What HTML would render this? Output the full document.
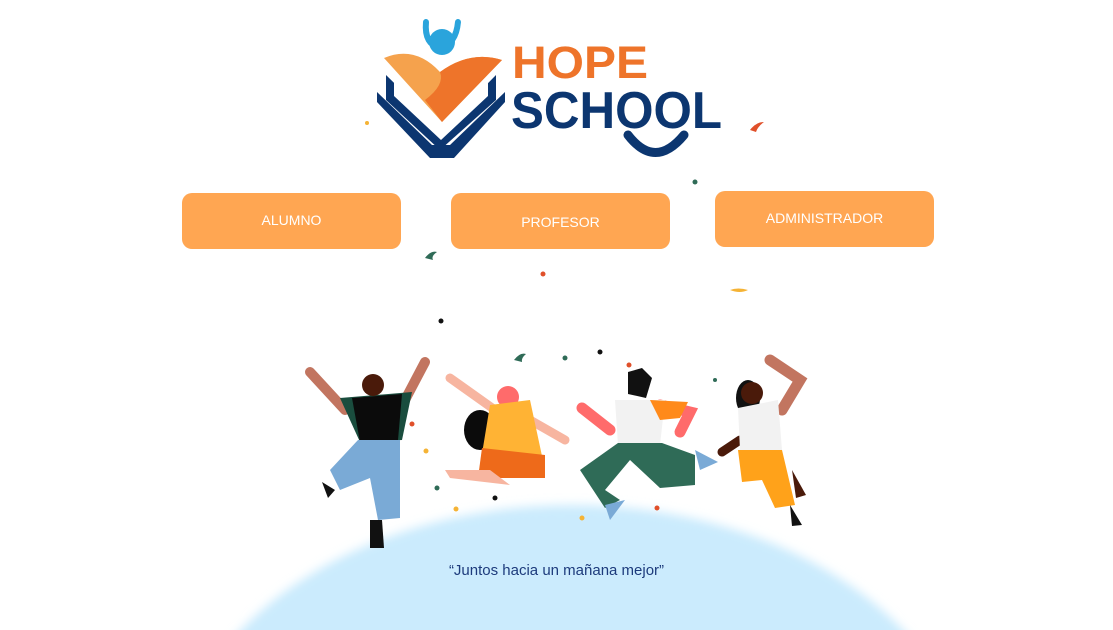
<!DOCTYPE html>
<html><head><meta charset="utf-8"><style>
html,body{margin:0;width:1113px;height:630px;overflow:hidden}
body{background:#fff;font-family:"Liberation Sans",sans-serif;position:relative}
.btn{position:absolute;width:219px;height:56px;background:#FFA652;border-radius:10px;color:#fff;font-size:14px;text-align:center;box-sizing:border-box}
.q{position:absolute;left:0;width:1113px;top:562px;text-align:center;color:#1d3b7c;font-size:15px}
svg{display:block}
</style></head><body>
<svg width="1113" height="630" style="position:absolute;left:0;top:0">
<defs><filter id="b"><feGaussianBlur stdDeviation="5"/></filter></defs>
<ellipse cx="572" cy="790" rx="400" ry="285" fill="#CBEBFD" filter="url(#b)"/>
<path d="M377 102 L430 158 L454 158 L505 102 L505 92 L450 145 L432 145 L377 92Z" fill="#0c3670"/>
<path d="M386 75 L386 100 L440 150 L496 100 L496 75 L442 130Z" fill="#0c3670"/>
<path d="M394 82 L394 96 L441 140 L488 96 L488 82 L442 124Z" fill="#fff"/>
<path d="M384 58 Q415 45 440 72 Q470 50 502 60 L442 122Z" fill="#F5A24D"/>
<path d="M440 72 Q470 50 502 60 L442 122 L425 100 Q445 85 440 72Z" fill="#EE742A"/>
<path d="M426 22 Q424 44 440 48 Q456 44 458 22" stroke="#2aa4dc" stroke-width="6" fill="none" stroke-linecap="round"/>
<circle cx="442" cy="42" r="13" fill="#2aa4dc"/>
<path d="M628 135 Q655 170 684 135" stroke="#0c3670" stroke-width="9" fill="none" stroke-linecap="round"/>
<text x="512" y="78" font-family="Liberation Sans" font-weight="bold" font-size="45" fill="#EE742A" textLength="136" lengthAdjust="spacingAndGlyphs">HOPE</text>
<text x="511" y="128" font-family="Liberation Sans" font-weight="bold" font-size="52" fill="#0c3670" textLength="211" lengthAdjust="spacingAndGlyphs">SCHOOL</text>
<g fill="#2f6b57"><circle cx="695" cy="182" r="2.5"/><circle cx="565" cy="358" r="2.5"/><circle cx="715" cy="380" r="2"/><circle cx="437" cy="488" r="2.5"/></g>
<g fill="#e0502a"><circle cx="543" cy="274" r="2.5"/><circle cx="629" cy="365" r="2.5"/><circle cx="412" cy="424" r="2.5"/><circle cx="657" cy="508" r="2.5"/></g>
<g fill="#111"><circle cx="441" cy="321" r="2.5"/><circle cx="600" cy="352" r="2.5"/><circle cx="495" cy="498" r="2.5"/></g>
<g fill="#f5b335"><circle cx="367" cy="123" r="2"/><circle cx="426" cy="451" r="2.5"/><circle cx="456" cy="509" r="2.5"/><circle cx="582" cy="518" r="2.5"/></g>
<path d="M425 258 q6 -8 12 -6 q-6 4 -4 8" fill="#2f6b57"/><path d="M514 360 q6-8 12-6 q-5 4-4 8" fill="#2f6b57"/>
<path d="M730 290 q8 -3 18 0 q-8 4 -18 0" fill="#f5b335"/><path d="M750 130 q6-8 14-8 q-6 4-8 10" fill="#e0502a"/>
<path d="M310 372 L345 410" stroke="#c27560" stroke-width="10" stroke-linecap="round"/>
<path d="M425 362 L405 400" stroke="#c27560" stroke-width="10" stroke-linecap="round"/>
<path d="M340 398 L412 392 L402 440 L360 442Z" fill="#1a4d3e"/>
<path d="M352 398 L402 394 L398 440 L360 442Z" fill="#0b0b0b"/>
<circle cx="373" cy="385" r="11" fill="#4a1a0a"/>
<path d="M358 440 L400 440 L400 518 L378 520 L370 478 L340 490 L330 470Z" fill="#7aaad6"/>
<path d="M370 520 L382 520 L384 548 L370 548Z" fill="#111"/><path d="M322 482 L335 490 L328 498Z" fill="#111"/>
<path d="M450 378 L495 410" stroke="#f7b5a0" stroke-width="9" stroke-linecap="round"/>
<path d="M530 420 L565 440" stroke="#f7b5a0" stroke-width="9" stroke-linecap="round"/>
<ellipse cx="480" cy="430" rx="16" ry="20" fill="#0b0b0b"/>
<circle cx="508" cy="397" r="11" fill="#ff6b6b"/>
<path d="M490 405 L530 400 L545 470 L478 478Z" fill="#ffb334"/>
<path d="M482 448 L545 455 L545 478 L478 478Z" fill="#ee6a1a"/>
<path d="M445 470 L490 470 L510 485 L450 478Z" fill="#f7b5a0"/>
<path d="M582 408 L610 430" stroke="#ff6b6b" stroke-width="11" stroke-linecap="round"/>
<path d="M660 405 L690 412 L680 432" stroke="#ff6b6b" stroke-width="11" fill="none" stroke-linecap="round"/>
<path d="M628 372 l14 -4 l10 10 l-6 20 l-18 -4Z" fill="#111"/>
<path d="M615 400 L665 400 L660 445 L618 445Z" fill="#f2f2f2"/>
<path d="M650 400 L688 402 L680 418 L660 420Z" fill="#ff8a1a"/>
<path d="M618 443 L662 443 L695 455 L695 485 L660 488 L630 460 L605 490 L620 500 L605 508 L580 470Z" fill="#2f6b57"/>
<path d="M605 505 L625 500 L610 520Z" fill="#7aaad6"/><path d="M695 450 L718 462 L700 470Z" fill="#7aaad6"/>
<path d="M770 360 L800 380 L782 410" stroke="#c27560" stroke-width="11" fill="none" stroke-linecap="round"/>
<path d="M740 440 L722 452" stroke="#4a1a0a" stroke-width="9" stroke-linecap="round"/>
<ellipse cx="748" cy="398" rx="12" ry="18" fill="#111"/>
<circle cx="752" cy="393" r="11" fill="#4a1a0a"/>
<path d="M738 408 L778 400 L782 450 L740 450Z" fill="#f2f2f2"/>
<path d="M738 450 L782 450 L795 505 L775 508 L762 480 L742 482Z" fill="#ffa21a"/>
<path d="M792 470 L806 495 L796 498Z" fill="#4a1a0a"/><path d="M790 505 L802 525 L792 526Z" fill="#111"/>
</svg>
<div class="btn" style="left:182px;top:193px;padding-top:19px">ALUMNO</div>
<div class="btn" style="left:451px;top:193px;padding-top:21px">PROFESOR</div>
<div class="btn" style="left:715px;top:191px;padding-top:19px">ADMINISTRADOR</div>
<div class="q">“Juntos hacia un mañana mejor”</div>
</body></html>
